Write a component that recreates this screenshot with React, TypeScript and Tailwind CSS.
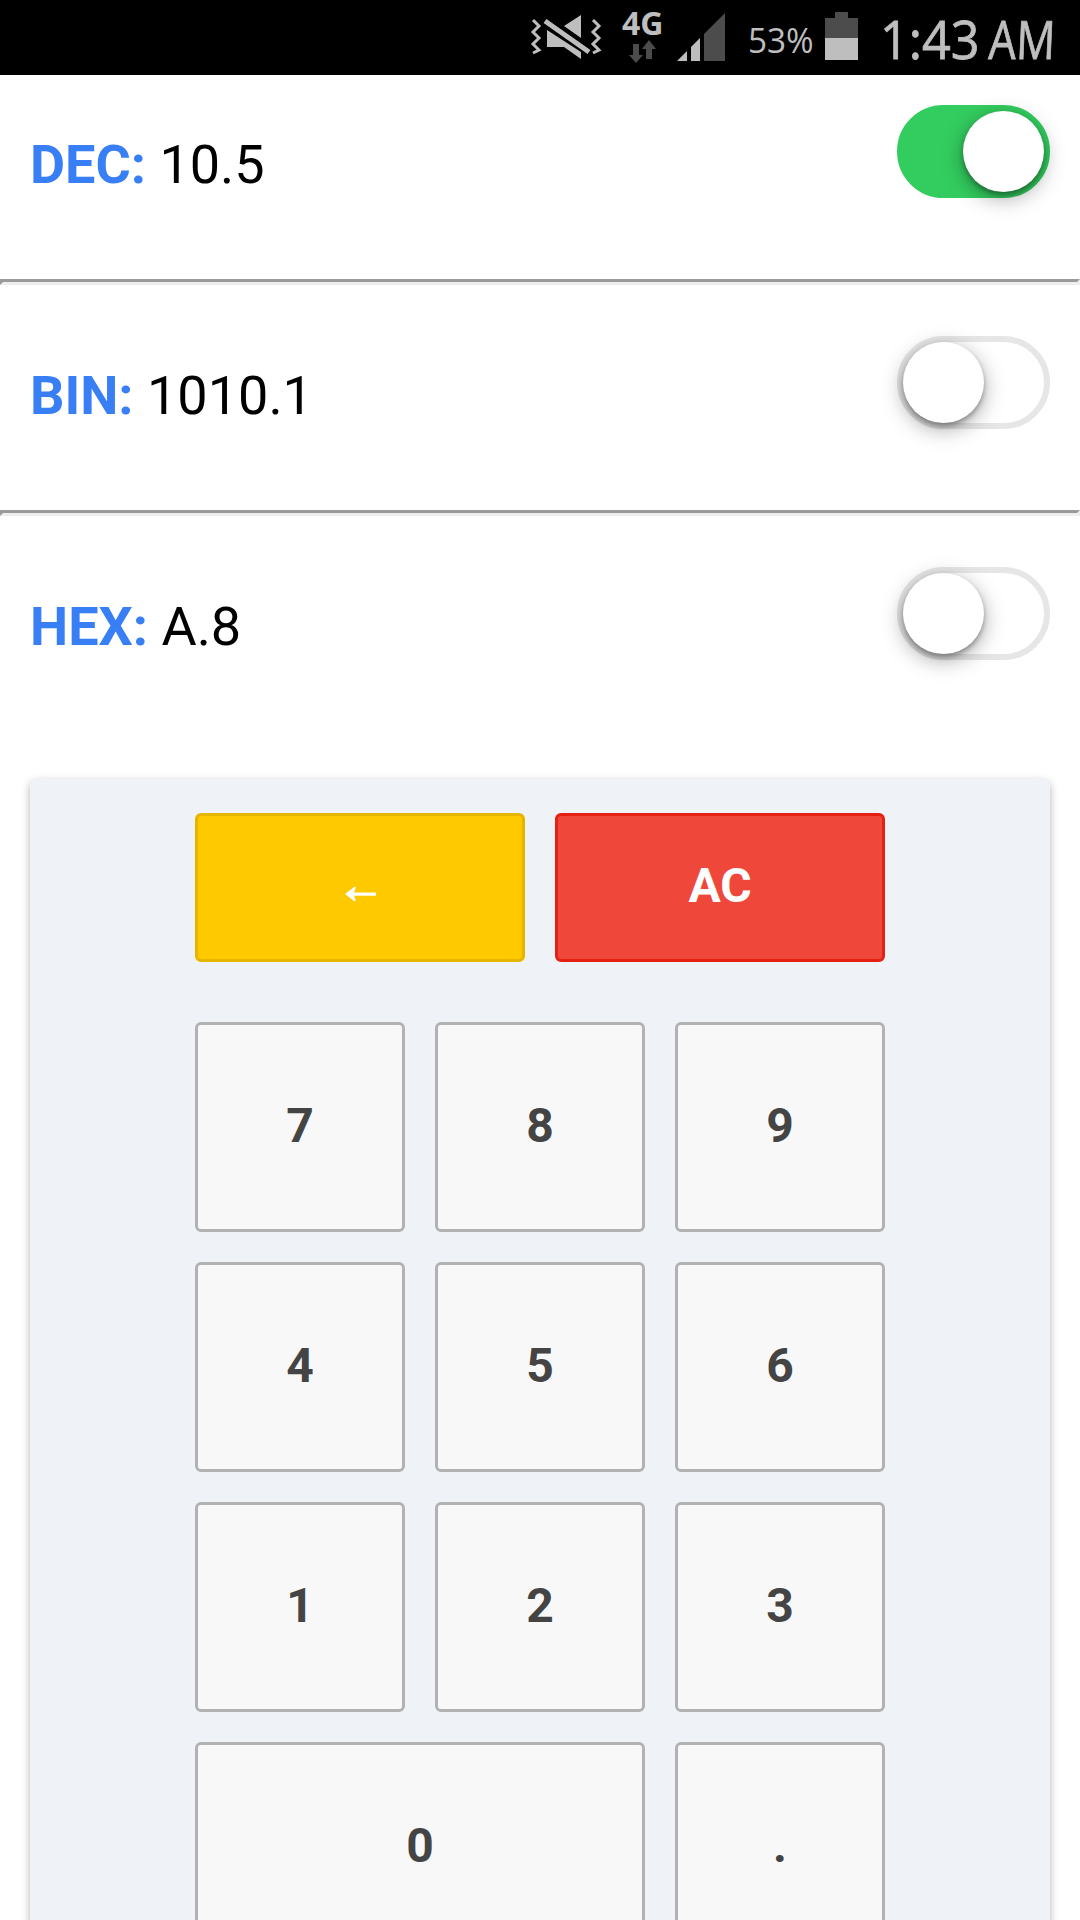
import { useState } from "react";

const readouts = [
  { label: "DEC:", value: "10.5" },
  { label: "BIN:", value: "1010.1" },
  { label: "HEX:", value: "A.8" },
];

const keys = ["7", "8", "9", "4", "5", "6", "1", "2", "3", "0", "."];

function StatusBar() {
  return (
    <header className="relative h-[75px] bg-black text-[#bebebe]">
      <svg className="absolute inset-0" width="1080" height="75" viewBox="0 0 1080 75">
        {/* muted / vibrate */}
        <g fill="none" stroke="#bebebe" strokeWidth="3">
          <path d="M533 20l6 6-6 6 6 6-6 6 6 6-6 3" />
          <path d="M593 20l6 6-6 6 6 6-6 6 6 6-6 3" />
        </g>
        <path d="M581 15v23l-17-12z" fill="#bebebe" />
        <path d="M547 30l34 22v7l-17-12h-17z" fill="#bebebe" />
        <path d="M545 21l44 31" stroke="#bebebe" strokeWidth="5" />
        {/* data arrows */}
        <path d="M633 44h6v11h4l-7 8-7-8h4z" fill="#4c4c4c" />
        <path d="M646 59h6v-10h4l-7-9-7 9h4z" fill="#4c4c4c" />
        {/* signal */}
        <path d="M677 61l10-10v10z" fill="#bebebe" />
        <path d="M691 61v-14l9-9v23z" fill="#bebebe" />
        <path d="M704 61v-27l21-21v48z" fill="#4c4c4c" />
        {/* battery */}
        <path d="M825 38v-20h10v-6h13v6h10v20z" fill="#4c4c4c" />
        <path d="M825 38h33v22h-33z" fill="#bebebe" />
      </svg>
      <span className="absolute left-[622px] top-[7px] font-['Open_Sans'] text-[32px] leading-[32px] font-bold">4G</span>
      <span className="absolute left-[748px] top-[23px] font-['Open_Sans'] text-[34px] leading-[34px] origin-left scale-x-[0.98]">
        53%
      </span>
      <span className="absolute left-[880px] top-[12px] font-['Open_Sans'] text-[53px] leading-[53px] origin-left scale-x-[0.95] [-webkit-text-stroke:0.8px_#bebebe]">
        1:43
      </span>
      <span className="absolute left-[989px] top-[12px] font-['Open_Sans'] text-[53px] leading-[53px] origin-left scale-x-[0.82] -skew-x-3 [-webkit-text-stroke:0.8px_#bebebe]">
        AM
      </span>
    </header>
  );
}

function Toggle({ on, onClick }: { on: boolean; onClick: () => void }) {
  return (
    <button
      role="switch"
      aria-checked={on}
      onClick={onClick}
      className={`flex h-[93px] w-[153px] shrink-0 rounded-full border-[6px] ${
        on ? "justify-end border-[#33cd5f] bg-[#33cd5f]" : "justify-start border-[#e6e6e6] bg-white"
      }`}
    >
      <span className="size-[81px] rounded-full bg-white shadow-[0_6px_21px_rgba(0,0,0,0.35),0_3px_5px_rgba(0,0,0,0.3)]" />
    </button>
  );
}

export default function App() {
  const [active, setActive] = useState("DEC:");

  return (
    <div className="h-[1920px] w-[1080px] overflow-hidden bg-white font-[Roboto,sans-serif]">
      <StatusBar />

      {readouts.map(({ label, value }, i) => (
        <div key={label}>
          {i > 0 && (
            <div className="h-[6px] border-[3px] border-t-[#9a9a9a] border-r-[#eeeeee] border-b-[#eeeeee] border-l-[#9a9a9a]" />
          )}
          <div
            className={`flex items-start justify-between px-[30px] ${
              i === 0 ? "h-[204px] pt-[30px]" : "h-[225px] pt-[51px]"
            }`}
          >
            <p className="mt-[28px] text-[54px] leading-[64px] text-black">
              <b className="font-bold text-[#387ef5]">{label}</b> {value}
            </p>
            <Toggle on={active === label} onClick={() => setActive(label)} />
          </div>
        </div>
      ))}

      <main className="mx-[30px] mt-[38px] h-[1300px] rounded-[6px] bg-[#eff3f8] px-[165px] pt-[34px] shadow-[0_3px_9px_rgba(0,0,0,0.3)]">
        <div className="grid grid-cols-2 gap-[30px] text-[48px] font-bold text-white">
          <button className="flex h-[149px] items-center justify-center rounded-[6px] border-[3px] border-[#e6b500] bg-[#ffc900]">
            <svg width="31" height="14" viewBox="0 0 31 14" className="mt-[12px]">
              <path d="M0 7L9 0h2L9 5.4h22v3.4H9l2 5.2H9z" fill="currentColor" />
            </svg>
          </button>
          <button className="flex h-[149px] items-center justify-center rounded-[6px] border-[3px] border-[#e42112] bg-[#ef473a] pb-[3px]">
            AC
          </button>
        </div>

        <div className="mt-[60px] grid grid-cols-3 gap-[30px]">
          {keys.map((k) => (
            <button
              key={k}
              className={`h-[210px] rounded-[6px] border-[3px] border-[#b2b2b2] bg-[#f8f8f8] pb-[2px] text-[48px] font-bold text-[#444444] ${
                k === "0" ? "col-span-2" : ""
              }`}
            >
              {k}
            </button>
          ))}
        </div>
      </main>
    </div>
  );
}
